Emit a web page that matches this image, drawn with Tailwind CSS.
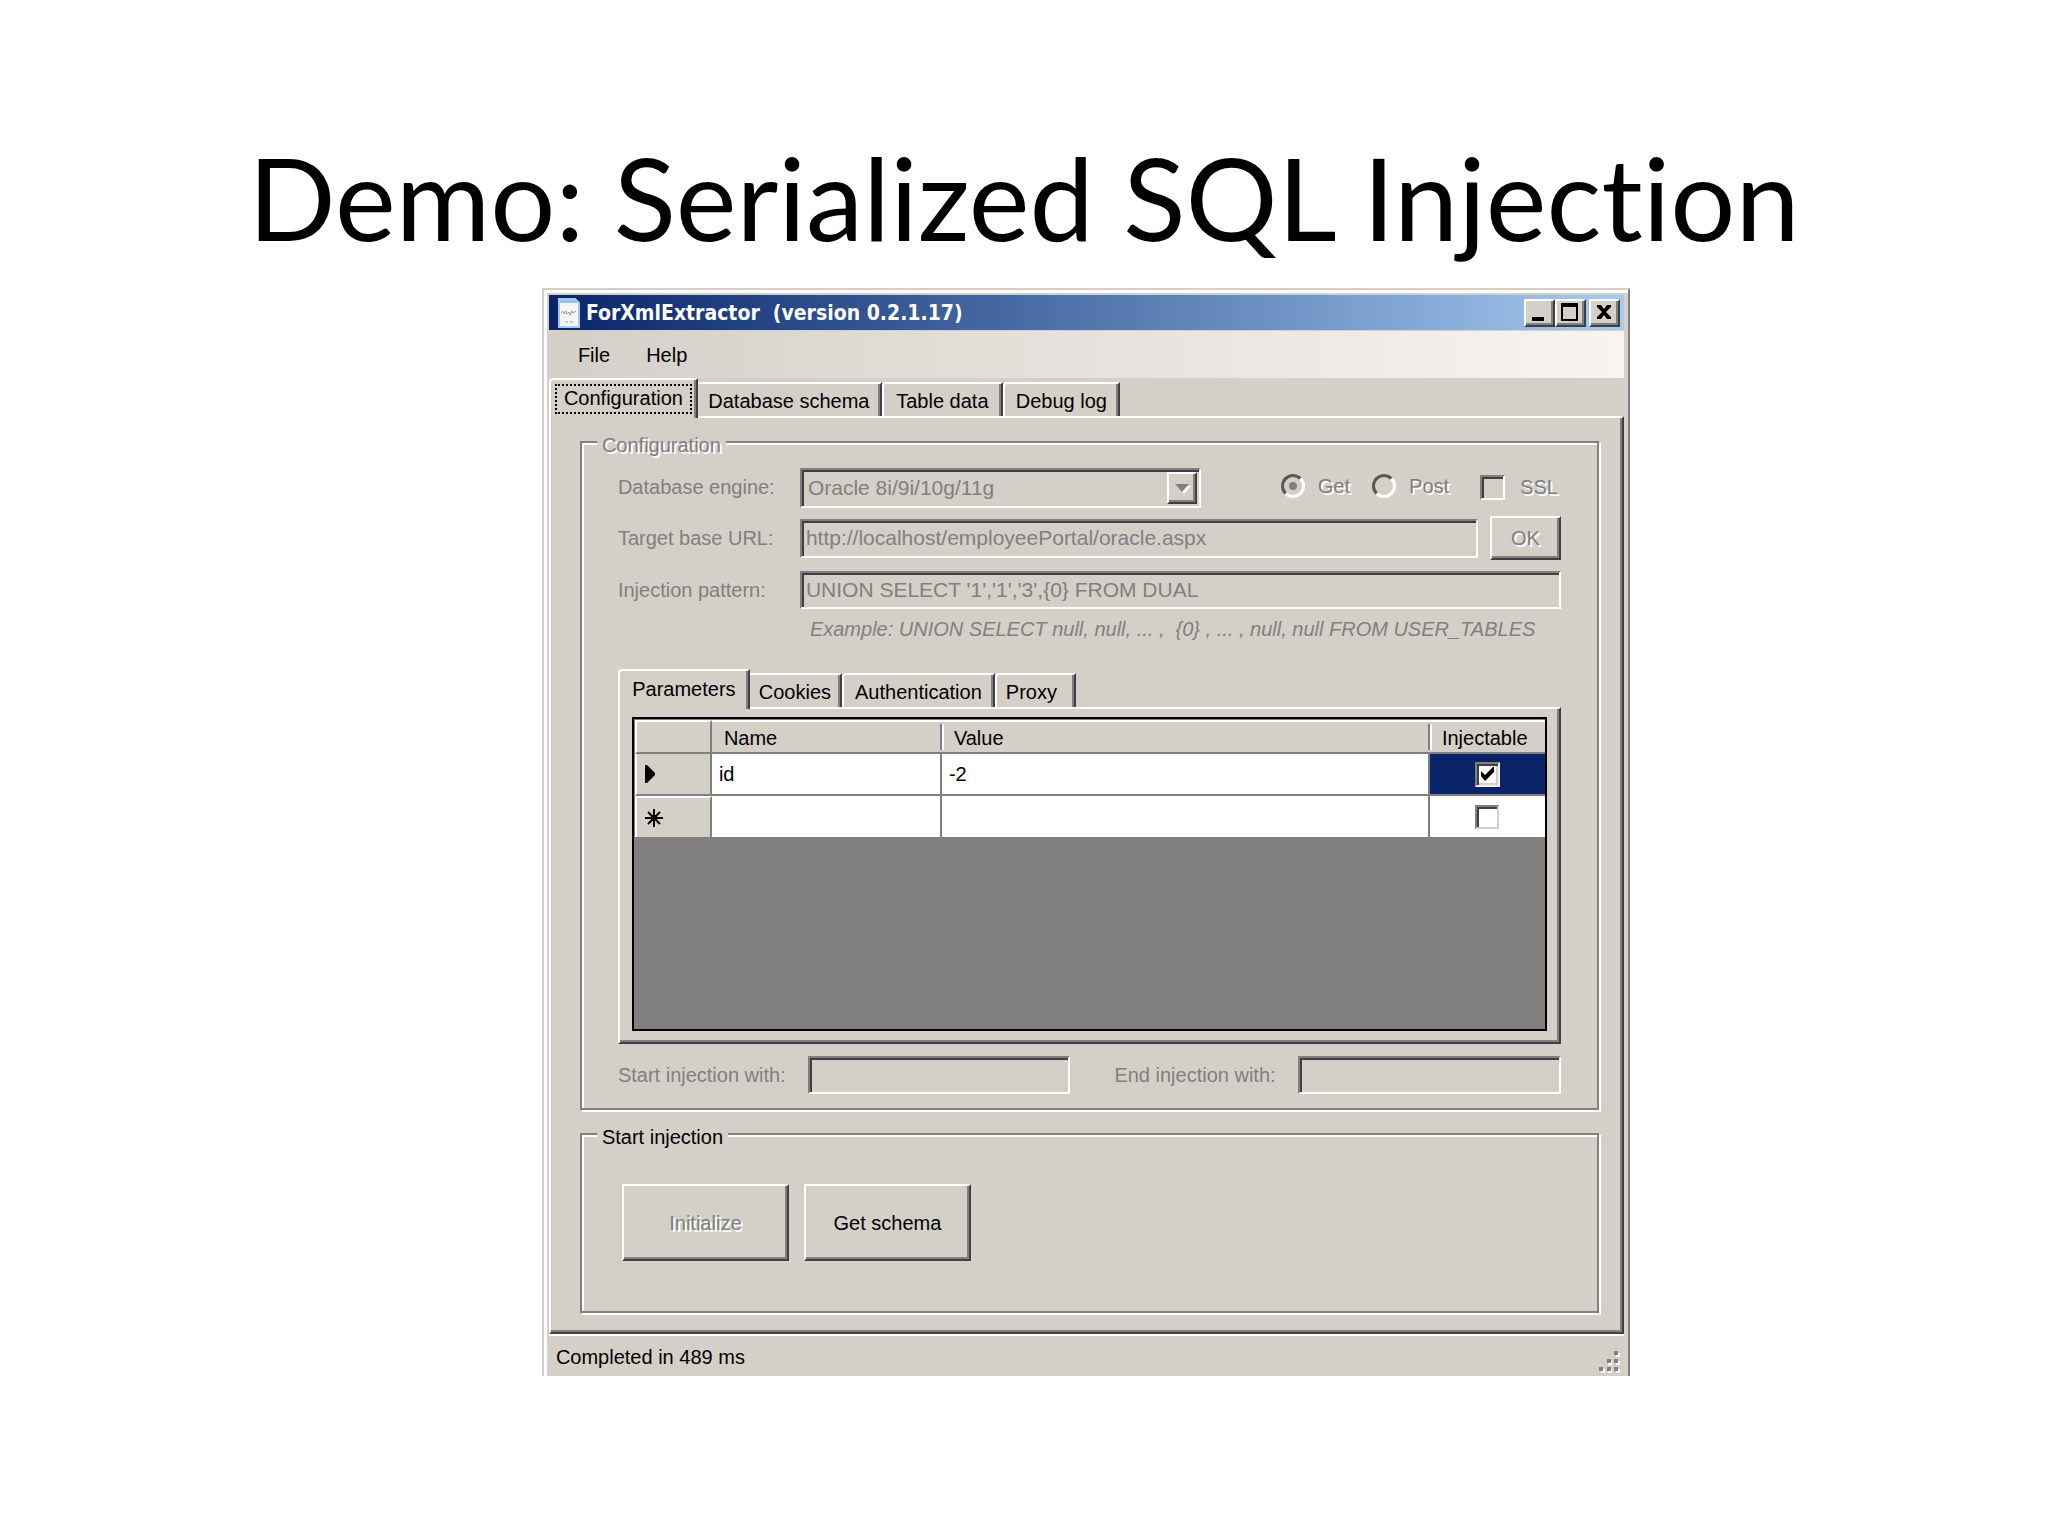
<!DOCTYPE html>
<html lang="en">
<head>
    <meta charset="UTF-8">
    <meta name="viewport" content="width=device-width, initial-scale=1.0">
    <title>Demo: Serialized SQL Injection</title>
    <script src="https://cdn.jsdelivr.net/npm/@tailwindcss/browser@4"></script>
</head>
<body class="bg-white min-h-screen text-black">
    <h1 class="pt-[136px] pb-8 text-center text-[115px] leading-[120px] font-normal font-['Lato',sans-serif] [font-variant-ligatures:none]">Demo: Serialized SQL Injection</h1>

    <!-- Application window -->
    <main class="w-[53.125%] ml-[26.46%] pt-[5px] pl-[5px] pr-1 bg-[#d4d0c8] border-t-2 border-l-2 border-r-2 border-t-[#d4d0c8] border-l-[#d4d0c8] border-r-[#808080] shadow-[inset_3px_3px_0_#fff] font-['Liberation_Sans',Arial,sans-serif] text-[20px] leading-6">

        <!-- Title bar -->
        <header class="flex items-center h-[35px] pl-[9px] pr-1 bg-linear-to-r from-[#0a246a] to-[#a6caf0]">
            <svg class="w-[22px] h-[30px]" viewBox="0 0 22 30" aria-hidden="true">
                <path d="M1 1h16l4 4v24H1z" fill="#f4f4f2" stroke="#a9c9e6" stroke-width="2"/>
                <path d="M2 2h15l3 3H2z" fill="#8fc3ee"/>
                <path d="M3 15l2-2 1 3 2-3 1 3 2-2 1 3 2-4 1 2 3-2M7 24h3M12 24h3" fill="none" stroke="#9a9a9a"/>
            </svg>
            <h2 class="ml-1.5 flex-1 whitespace-pre text-white font-bold text-[21px] font-['DejaVu_Sans_Condensed','DejaVu_Sans',sans-serif]">ForXmlExtractor  (version 0.2.1.17)</h2>
            <button type="button" aria-label="Minimize" class="w-[31px] h-7 bg-[#d4d0c8] border-2 border-t-white border-l-white border-r-[#404040] border-b-[#404040] shadow-[inset_-2px_-2px_0_#808080]">
                <svg class="w-[27px] h-6" viewBox="0 0 27 24"><path d="M6 16h12v4H6z"/></svg>
            </button>
            <button type="button" aria-label="Maximize" class="w-[31px] h-7 bg-[#d4d0c8] border-2 border-t-white border-l-white border-r-[#404040] border-b-[#404040] shadow-[inset_-2px_-2px_0_#808080]">
                <svg class="w-[27px] h-6" viewBox="0 0 27 24"><path d="M4 2h17v18H4zM6 6v12h13V6z" fill-rule="evenodd"/></svg>
            </button>
            <button type="button" aria-label="Close" class="ml-[3px] w-[31px] h-7 bg-[#d4d0c8] border-2 border-t-white border-l-white border-r-[#404040] border-b-[#404040] shadow-[inset_-2px_-2px_0_#808080]">
                <svg class="w-[27px] h-6" viewBox="0 0 27 24"><path d="M6 4h4l3 4 3-4h4v2l-5 5 5 5v2h-4l-3-4-3 4H6v-2l5-5-5-5z"/></svg>
            </button>
        </header>

        <!-- Menu -->
        <nav class="flex items-center gap-9 mt-px h-[47px] pl-[29px] bg-linear-to-r from-[#d4d0c8] to-[#f7f4f2]">
            <button type="button">File</button>
            <button type="button">Help</button>
        </nav>

        <!-- Main tabs -->
        <div role="tablist" class="flex items-end h-[38px]">
            <button type="button" role="tab" aria-selected="true" class="relative z-10 w-[149px] h-10 -mb-0.5 p-1 bg-[#d4d0c8] border-t-2 border-l-2 border-r-2 border-t-white border-l-white border-r-[#404040] rounded-tl-[4px] shadow-[inset_-2px_0_0_#808080]">
                <span class="block h-[30px] leading-6 border-2 border-dotted border-black">Configuration</span>
            </button>
            <button type="button" role="tab" aria-selected="false" class="w-[184px] h-[34px] pt-0.5 border-t-2 border-r-2 border-t-white border-r-[#404040] shadow-[inset_-2px_0_0_#808080]">Database schema</button>
            <button type="button" role="tab" aria-selected="false" class="w-[121px] h-[34px] pt-0.5 border-t-2 border-l-2 border-r-2 border-t-white border-l-white border-r-[#404040] rounded-tl-[4px] shadow-[inset_-2px_0_0_#808080]">Table data</button>
            <button type="button" role="tab" aria-selected="false" class="w-[117px] h-[34px] pt-0.5 border-t-2 border-l-2 border-r-2 border-t-white border-l-white border-r-[#404040] rounded-tl-[4px] shadow-[inset_-2px_0_0_#808080]">Debug log</button>
        </div>

        <section class="pt-[9px] pl-[29px] pr-[23px] pb-[19px] border-2 border-t-white border-l-white border-r-[#404040] border-b-[#404040] shadow-[inset_-2px_-2px_0_#808080]">
            <fieldset class="min-w-0 pl-9 pr-9 pb-3.5 border-2 border-[#808080] shadow-[inset_2px_2px_0_#fff,2px_2px_0_#fff]">
                <legend class="-ml-[21px] px-[5px] pt-1.5 bg-[#d4d0c8] text-[#808080] [text-shadow:2px_2px_0_#fff]">Configuration</legend>

                <div class="flex items-center mt-[11px] h-10 text-[#808080]">
                    <label for="engine" class="mb-0.5 w-[182px]">Database engine:</label>
                    <div class="relative flex-1">
                        <select id="engine" disabled class="block appearance-none w-full h-10 pl-1.5 opacity-100 text-[21px] border-2 border-t-[#808080] border-l-[#808080] border-r-white border-b-white shadow-[inset_2px_2px_0_#404040] bg-[#d4d0c8] text-[#808080]">
                            <option>Oracle 8i/9i/10g/11g</option>
                        </select>
                        <span class="absolute right-1 top-1 w-[30px] h-8 bg-[#d4d0c8] border-2 border-t-white border-l-white border-r-[#404040] border-b-[#404040] shadow-[inset_-2px_-2px_0_#808080] pointer-events-none">
                            <svg class="w-[26px] h-7" viewBox="0 0 26 28"><path d="M8 12h14l-7 8z" fill="#fff"/><path d="M6 10h14l-7 8z" fill="#808080"/></svg>
                        </span>
                    </div>
                    <label class="flex items-center gap-[13px] ml-20 mb-1 [text-shadow:2px_2px_0_#fff]">
                        <span class="relative flex">
                            <input type="radio" name="method" checked disabled class="appearance-none w-6 h-6 rounded-full border-3 border-t-[#5a5854] border-l-[#5a5854] border-r-white border-b-white">
                            <span class="absolute left-2 top-2 w-2 h-2 rounded-full bg-[#808080]"></span>
                        </span>
                        Get
                    </label>
                    <label class="flex items-center gap-[13px] ml-[22px] mb-1 [text-shadow:2px_2px_0_#fff]">
                        <input type="radio" name="method" disabled class="appearance-none w-6 h-6 rounded-full border-3 border-t-[#5a5854] border-l-[#5a5854] border-r-white border-b-white">
                        Post
                    </label>
                    <label class="flex items-center gap-[15px] ml-[31px] mb-0.5 pr-[3px] [text-shadow:2px_2px_0_#fff]">
                        <input type="checkbox" disabled class="appearance-none w-[25px] h-[25px] border-2 border-t-[#808080] border-l-[#808080] border-r-white border-b-white shadow-[inset_2px_2px_0_#404040]">
                        SSL
                    </label>
                </div>

                <div class="flex items-center mt-2 text-[#808080]">
                    <label for="url" class="w-[182px]">Target base URL:</label>
                    <input id="url" type="text" disabled value="http://localhost/employeePortal/oracle.aspx" class="flex-1 min-w-0 h-[39px] pl-1 text-[21px] border-2 border-t-[#808080] border-l-[#808080] border-r-white border-b-white shadow-[inset_2px_2px_0_#404040]">
                    <button type="button" disabled class="ml-3 w-[71px] h-11 border-2 border-t-white border-l-white border-r-[#404040] border-b-[#404040] shadow-[inset_-2px_-2px_0_#808080] [text-shadow:2px_2px_0_#fff]">OK</button>
                </div>

                <div class="flex items-center mt-[11px] text-[#808080]">
                    <label for="pattern" class="w-[182px]">Injection pattern:</label>
                    <input id="pattern" type="text" disabled value="UNION SELECT '1','1','3',{0} FROM DUAL" class="flex-1 min-w-0 h-[38px] pl-1 text-[21px] border-2 border-t-[#808080] border-l-[#808080] border-r-white border-b-white shadow-[inset_2px_2px_0_#404040]">
                </div>
                <p class="mt-2 ml-48 italic whitespace-pre text-[#808080]">Example: UNION SELECT null, null, ... ,  {0} , ... , null, null FROM USER_TABLES</p>

                <!-- Request tabs -->
                <div role="tablist" class="flex items-end mt-7 h-[38px]">
                    <button type="button" role="tab" aria-selected="true" class="relative z-10 w-[132px] h-10 -mb-0.5 pb-0.5 bg-[#d4d0c8] border-t-2 border-l-2 border-r-2 border-t-white border-l-white border-r-[#404040] rounded-tl-[4px] shadow-[inset_-2px_0_0_#808080]">Parameters</button>
                    <button type="button" role="tab" aria-selected="false" class="w-[92px] h-[34px] pt-0.5 border-t-2 border-r-2 border-t-white border-r-[#404040] shadow-[inset_-2px_0_0_#808080]">Cookies</button>
                    <button type="button" role="tab" aria-selected="false" class="w-[153px] h-[34px] pt-0.5 border-t-2 border-l-2 border-r-2 border-t-white border-l-white border-r-[#404040] rounded-tl-[4px] shadow-[inset_-2px_0_0_#808080]">Authentication</button>
                    <button type="button" role="tab" aria-selected="false" class="w-[81px] h-[34px] pt-0.5 pr-2 border-t-2 border-l-2 border-r-2 border-t-white border-l-white border-r-[#404040] rounded-tl-[4px] shadow-[inset_-2px_0_0_#808080]">Proxy</button>
                </div>
                <div class="pt-2 px-3 pb-[11px] border-2 border-t-white border-l-white border-r-[#404040] border-b-[#404040] shadow-[inset_-2px_-2px_0_#808080]">
                    <div class="min-h-[314px] pt-px pl-px border-2 border-black bg-[#827f80]">
                        <table class="w-full table-fixed border-separate border-spacing-0 text-left">
                            <colgroup>
                                <col class="w-[77px]">
                                <col class="w-[230px]">
                                <col>
                                <col class="w-[115px]">
                            </colgroup>
                            <thead>
                                <tr class="h-[34px] bg-[#d4d0c8]">
                                    <th aria-label="Row" class="p-0 border-t-2 border-l-2 border-b-2 border-r-2 border-t-white border-l-white border-b-[#808080] border-r-[#808080]"></th>
                                    <th class="p-0 border-t-2 border-b-2 border-t-white border-b-[#808080] font-normal"><div class="h-[26px] leading-7 pl-3 border-r-2 border-[#808080]">Name</div></th>
                                    <th class="p-0 border-t-2 border-b-2 border-t-white border-b-[#808080] font-normal"><div class="h-[26px] leading-7 pl-2.5 border-l-2 border-r-2 border-l-white border-r-[#808080]">Value</div></th>
                                    <th class="p-0 border-t-2 border-b-2 border-t-white border-b-[#808080] font-normal"><div class="h-[26px] leading-7 pl-2.5 border-l-2 border-l-white">Injectable</div></th>
                                </tr>
                            </thead>
                            <tbody>
                                <tr class="h-[42px] bg-white">
                                    <td class="p-0 pl-2 bg-[#d4d0c8] border-l-2 border-r-2 border-b-2 border-l-white border-r-[#808080] border-b-[#808080]">
                                        <svg class="block w-[18px] h-[18px]" viewBox="0 0 18 18"><path d="M0 0h2l8 8v2l-8 8H0z"/></svg>
                                    </td>
                                    <td class="p-0 pl-[7px] border-r-2 border-b-2 border-[#808080]">id</td>
                                    <td class="p-0 pl-[7px] border-r-2 border-b-2 border-[#808080]">-2</td>
                                    <td class="p-0 bg-[#0a246a] border-b-2 border-[#808080]">
                                        <div class="relative mx-auto w-[25px] h-[25px]">
                                            <input type="checkbox" checked aria-label="Injectable id" class="block appearance-none w-[25px] h-[25px] bg-white border-2 border-t-[#808080] border-l-[#808080] border-r-[#f4f2ee] border-b-[#f4f2ee] shadow-[inset_2px_2px_0_#404040,inset_-2px_-2px_0_#d4d0c8]">
                                            <svg class="absolute left-0 top-0 w-[25px] h-[25px] pointer-events-none" viewBox="0 0 25 25"><path d="M6 9l4 4 8-8h1v5l-9 9-4-5z"/></svg>
                                        </div>
                                    </td>
                                </tr>
                                <tr class="h-[41px] bg-white">
                                    <td class="p-0 pl-2 bg-[#d4d0c8] border-t-2 border-l-2 border-r-2 border-t-white border-l-white border-r-[#808080]">
                                        <svg class="block w-[18px] h-[18px]" viewBox="0 0 18 18"><path d="M9 0v18M0 9h18M3 3l12 12M15 3L3 15" stroke="#000" stroke-width="2"/><path d="M6 6h6v6H6z"/></svg>
                                    </td>
                                    <td class="p-0 border-r-2 border-[#808080]"></td>
                                    <td class="p-0 border-r-2 border-[#808080]"></td>
                                    <td class="p-0">
                                        <input type="checkbox" aria-label="Injectable new row" class="block mx-auto appearance-none w-[24px] h-[24px] bg-white border-2 border-t-[#808080] border-l-[#808080] border-r-[#d4d0c8] border-b-[#d4d0c8] shadow-[inset_2px_2px_0_#404040]">
                                    </td>
                                </tr>
                            </tbody>
                        </table>
                    </div>
                </div>

                <div class="flex items-center mt-3 text-[#808080]">
                    <label for="start" class="w-[190px]">Start injection with:</label>
                    <input id="start" type="text" disabled class="flex-1 min-w-0 h-[38px] border-2 border-t-[#808080] border-l-[#808080] border-r-white border-b-white shadow-[inset_2px_2px_0_#404040]">
                    <label for="end" class="ml-11 w-[184px]">End injection with:</label>
                    <input id="end" type="text" disabled class="flex-1 min-w-0 h-[38px] border-2 border-t-[#808080] border-l-[#808080] border-r-white border-b-white shadow-[inset_2px_2px_0_#404040]">
                </div>
            </fieldset>

            <fieldset class="min-w-0 mt-[9px] pl-10 pb-[50px] border-2 border-[#808080] shadow-[inset_2px_2px_0_#fff,2px_2px_0_#fff]">
                <legend class="-ml-[25px] px-[5px] pt-1.5 bg-[#d4d0c8]">Start injection</legend>
                <div class="flex gap-[15px] mt-[35px]">
                    <button type="button" disabled class="w-[167px] h-[77px] border-2 border-t-white border-l-white border-r-[#404040] border-b-[#404040] shadow-[inset_-2px_-2px_0_#808080] text-[#808080] [text-shadow:2px_2px_0_#fff]">Initialize</button>
                    <button type="button" class="w-[167px] h-[77px] border-2 border-t-white border-l-white border-r-[#404040] border-b-[#404040] shadow-[inset_-2px_-2px_0_#808080]">Get schema</button>
                </div>
            </fieldset>
        </section>

        <!-- Status bar -->
        <footer class="flex items-center justify-between h-[42px] pl-[7px] pr-[3px] border-t-2 border-white">
            <p class="pt-0.5">Completed in 489 ms</p>
            <svg class="w-[22px] h-6 mt-3" viewBox="0 0 22 24" aria-hidden="true">
                <path d="M17 3h4v4h-4zM9 11h4v4H9zM17 11h4v4h-4zM2 19h4v4H2zM9 19h4v4H9zM17 19h4v4h-4z" fill="#fff"/>
                <path d="M15 1h4v4h-4zM8 9h4v4H8zM15 9h4v4h-4zM0 17h4v4H0zM8 17h4v4H8zM15 17h4v4h-4z" fill="#808080"/>
            </svg>
        </footer>
    </main>
</body>
</html>
